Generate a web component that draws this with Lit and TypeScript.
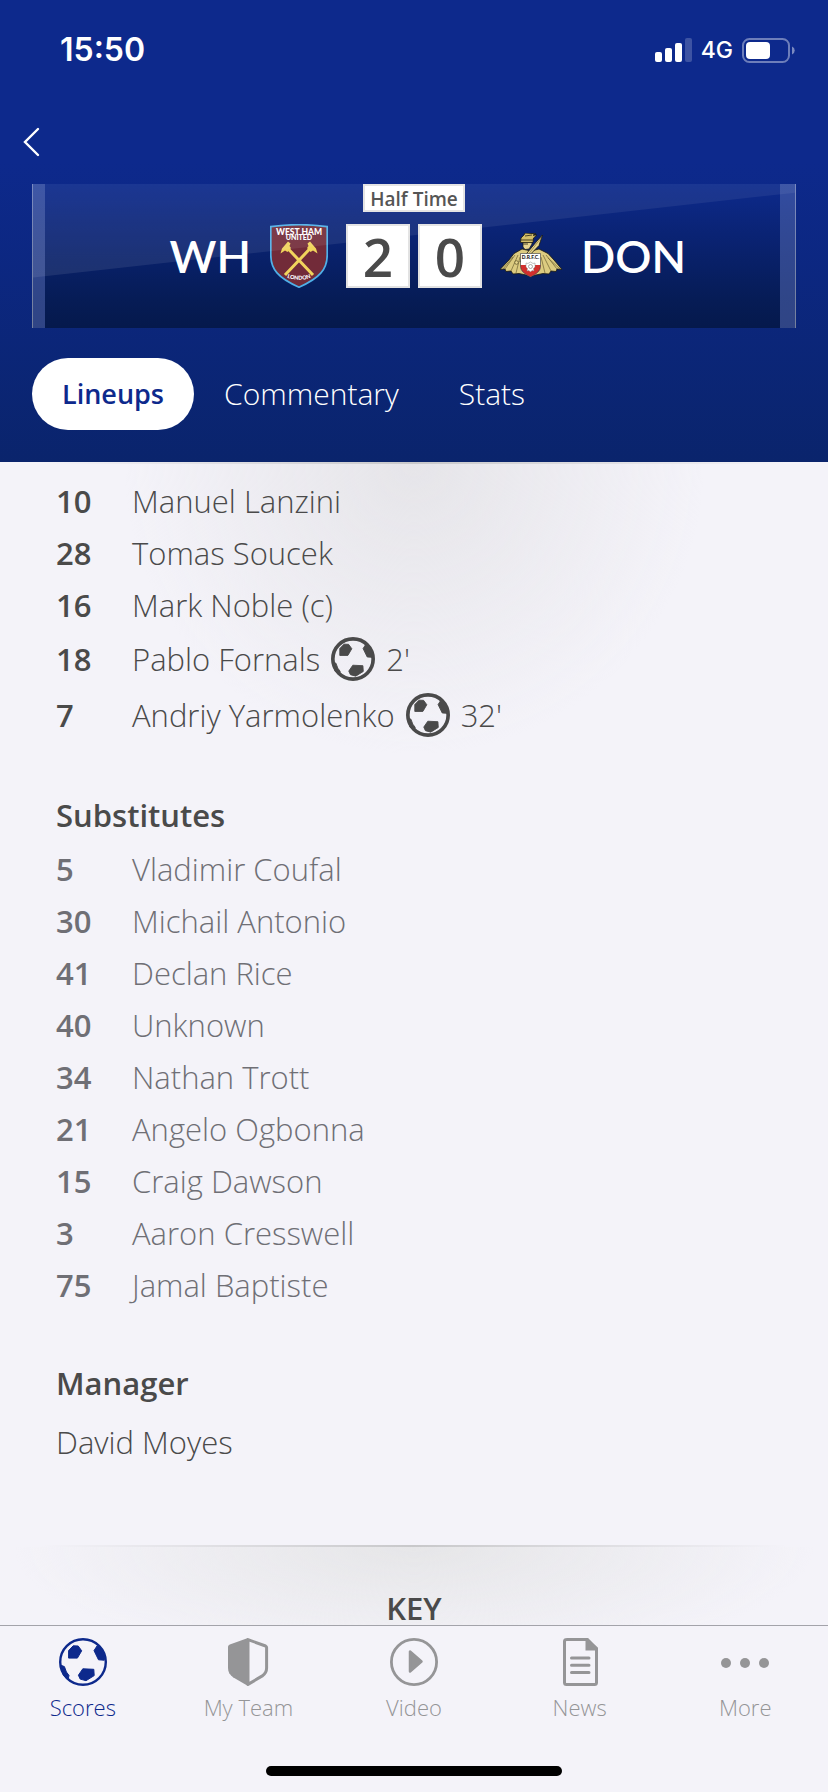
import { LitElement, html, css, svg, nothing } from "lit";
import { customElement, property, state } from "lit/decorators.js";
import { classMap } from "lit/directives/class-map.js";

interface Player {
  number: number;
  name: string;
  goal?: string;
}

const STARTERS: Player[] = [
  { number: 10, name: "Manuel Lanzini" },
  { number: 28, name: "Tomas Soucek" },
  { number: 16, name: "Mark Noble (c)" },
  { number: 18, name: "Pablo Fornals", goal: "2'" },
  { number: 7, name: "Andriy Yarmolenko", goal: "32'" },
];

const SUBSTITUTES: Player[] = [
  { number: 5, name: "Vladimir Coufal" },
  { number: 30, name: "Michail Antonio" },
  { number: 41, name: "Declan Rice" },
  { number: 40, name: "Unknown" },
  { number: 34, name: "Nathan Trott" },
  { number: 21, name: "Angelo Ogbonna" },
  { number: 15, name: "Craig Dawson" },
  { number: 3, name: "Aaron Cresswell" },
  { number: 75, name: "Jamal Baptiste" },
];

const ballPatches = svg`
  <path fill="currentColor" stroke="currentColor" stroke-linejoin="round" d="M9.6 12.6 14.2 7.8l5 .2 3.5 4.8-4.3 7.3H9.6ZM35 12.6l3-4.6 3 1.2 5 8.8-.8 4.2-5.7-.4ZM19.4 37.2l4.4-6.4 11 .5.4 6.3L27 42.7l-5.8-1.6ZM1.4 27l4 1.6 2 5.4 2.6 3.4-.8 3.8-4.8-4Z"/>`;

const goalIcon = html`<svg class="ball" viewBox="0 0 48 48" role="img" aria-label="Goal">
  <circle cx="24" cy="24" r="22" fill="none" stroke="currentColor" stroke-width="4"/>${ballPatches}
</svg>`;

const TABS = [
  {
    label: "Scores",
    icon: svg`<circle cx="24" cy="24" r="22.8" fill="none" stroke="currentColor" stroke-width="2.4"/>${ballPatches}`,
  },
  {
    label: "My Team",
    icon: svg`<path d="M24 1.6 41.600 8a1.800 1.800 0 0 1 1 1.800V30c0 3.400-1.500 6-4.300 7.900L24 46.400Z" fill="none" stroke="currentColor" stroke-width="3" stroke-linejoin="round"/>
      <path d="M24 0v48L9 39.200C5.800 37 4 33.800 4 30V9c0-1.200.700-2.100 1.800-2.500Z" fill="currentColor"/>`,
  },
  {
    label: "Video",
    icon: svg`<circle cx="24" cy="24" r="22.600" fill="none" stroke="currentColor" stroke-width="2.800"/>
      <path d="M20 13.500v20L31.500 23.500Z" fill="currentColor" stroke="currentColor" stroke-width="2.500" stroke-linejoin="round"/>`,
  },
  {
    label: "News",
    icon: svg`<path d="M10.400 1.500H31L40.500 10.500V44.500a2 2 0 0 1-2 2h-28a2 2 0 0 1-2-2v-41a2 2 0 0 1 2-2Z" fill="none" stroke="currentColor" stroke-width="3"/>
      <path d="M29.500 1v11.500H41.500V10L32 0Z" fill="currentColor"/>
      <path d="M15.500 20h17.500M15.500 27.300h17.500M15.500 34.500h17.500" stroke="currentColor" stroke-width="3" stroke-linecap="round"/>`,
  },
  {
    label: "More",
    icon: svg`<g fill="currentColor"><circle cx="5" cy="25" r="5"/><circle cx="24" cy="25" r="5"/><circle cx="43" cy="25" r="5"/></g>`,
  },
];

const westHamCrest = html`<svg class="crest-home" viewBox="0 0 58 64" role="img" aria-label="West Ham United crest">
  <path d="M.8 2.600Q29-1.200 57.200 2.600V31C57.200 45 50 54 29 63.200 8 54 .8 45 .8 31Z" fill="#722b39" stroke="#4fb0e8" stroke-width="1.700"/>
  <g fill="#fff" font-family="Lato, sans-serif" font-weight="900" text-anchor="middle">
    <text x="29" y="10.500" font-size="8.500">WEST HAM</text>
    <text x="29" y="16" font-size="7">UNITED</text>
    <path id="london" d="M14 52.500Q29 59 44 52.500" fill="none"/>
    <text font-size="5.500"><textPath href="#london" startOffset="50%">LONDON</textPath></text>
  </g>
  <g stroke="#f1d45c" fill="#f1d45c">
    <path d="M15.500 22 43 51M42.500 22 15 51" stroke-width="3"/>
    <path stroke="none" d="M18 17.500l2.500 2-1 2.500 1.500 2-3.500 4-2.500-1.500-4.500 3 1.500-5ZM40 17.500l-2.500 2 1 2.500-1.500 2 3.500 4 2.500-1.500 4.500 3-1.500-5Z"/>
  </g>
</svg>`;

const doncasterCrest = html`<svg class="crest-away" viewBox="0 0 62 46" role="img" aria-label="Doncaster Rovers crest">
  <path d="M22 16 14 20.500 9 27 0 36.500 5 36 6 38.500 11 38 13 41 19 40.500 31 43 43 40.500 49 41 51 38 56 38.500 57 36 62 36.500 54 27 48 20.500 39 16 31 18Z" fill="#dccb80" stroke="#19180f" stroke-width=".8"/>
  <path d="M15 22 5 36M18 22 11 38M20 24 16 40M46 22 57 36M43 22 51 38M41 24 45 40M48 25 60 36M13 24 3 36" stroke="#6d6232" stroke-width=".7"/>
  <path d="M23 9v5l2 2.500 4-.5 3-5V8Z" fill="#e6d592" stroke="#19180f" stroke-width=".7"/>
  <path d="M20.500 9.500 21 5 24 2l1-2 11 .8-3 1.400 4-.2-3.500 3L33 9.500Z" fill="#d3be69" stroke="#19180f" stroke-width=".8"/>
  <path d="M21 7h12M25 3l7-1M23 11h5" stroke="#4a4324"/>
  <path d="M42.500 2 39 12.500 23 29l-3-.5L37 8Z" fill="#e8d78e" stroke="#19180f" stroke-width=".8"/>
  <path d="M41 5 24 27" stroke="#85763c" stroke-width=".7"/>
  <circle cx="16.500" cy="29.500" r="1.800" fill="#e8d78e" stroke="#5b5129" stroke-width=".7"/>
  <path d="M20.500 20.500h20V33c0 5-4 8-10 11-6-3-10-6-10-11Z" fill="#fff"/>
  <path d="M20.500 32h20v1c0 5-4 8-10 11-6-3-10-6-10-11Z" fill="#d22f2d"/>
  <path d="M20.500 20.500h20V33c0 5-4 8-10 11-6-3-10-6-10-11Z" fill="none" stroke="#333" stroke-width=".6"/>
  <text x="30.500" y="26" text-anchor="middle" font-family="Lato, sans-serif" font-weight="900" font-size="5" fill="#222">D.R.F.C.</text>
  <path d="M26 30l2 .5 2.500-1.500 2.500 1.500 2-.5v4l-1.500 1.500.5 2.500-2-.5L30.500 39 29 37.500l-2 .5.500-2.500L26 34Z" fill="#fff" stroke="#888" stroke-width=".5"/>
  <circle cx="30.500" cy="33.500" r="2" fill="none" stroke="#777" stroke-width=".6"/>
</svg>`;

@customElement("squad-list")
class SquadList extends LitElement {
  @property({ attribute: false }) players: Player[] = [];

  static styles = css`
    :host { display: block; }
    .list { margin: 0; padding: 0; list-style: none; }
    .row { display: grid; grid-template-columns: 76px 1fr; align-items: center; min-height: 52px; }
    .row.scored { min-height: 56px; }
    .number { font-weight: 600; }
    .name { display: flex; align-items: center; gap: 11px; }
    .ball { width: 44px; height: 44px; }
  `;

  render() {
    return html`<ul class="list">
      ${this.players.map(
        (p) => html`<li class=${classMap({ row: true, scored: !!p.goal })}>
          <span class="number">${p.number}</span>
          <span class="name">${p.name}${p.goal ? html`${goalIcon}<span>${p.goal}</span>` : nothing}</span>
        </li>`
      )}
    </ul>`;
  }
}

@customElement("score-board")
class ScoreBoard extends LitElement {
  static styles = css`
    :host {
      display: grid;
      grid-template-columns: 12px 1fr 15px;
      height: 144px;
      border: solid rgba(255, 255, 255, 0.45);
      border-width: 0 1px;
      box-sizing: border-box;
      background: linear-gradient(#0d2a8c 0%, #0a2374 35%, #061c56 80%, #05194c 100%);
    }
    .frame {
      grid-area: 1 / 1 / 2 / 4;
      background: linear-gradient(rgba(255, 255, 255, 0.06), rgba(255, 255, 255, 0.1));
      clip-path: polygon(0 0, 100% 0, 100% 6%, 0 65%);
    }
    .post { grid-row: 1; background: linear-gradient(rgba(120, 140, 200, 0.35), rgba(90, 112, 190, 0.5)); }
    .post.left { grid-column: 1; }
    .post.right { grid-column: 3; }
    .content { grid-area: 1 / 1 / 2 / 4; display: flex; flex-direction: column; align-items: center; gap: 12px; }
    .status {
      box-sizing: border-box;
      height: 28px;
      padding: 0 5px;
      border: 2px solid #e2e2e2;
      background: #fff;
      color: #4a4a4a;
      font: 600 19px/26px "Open Sans", sans-serif;
    }
    .match { display: grid; grid-template-columns: 1fr auto 1fr; align-items: center; gap: 18px; width: 100%; }
    .team { display: flex; align-items: center; gap: 19px; font: 600 45px/64px Lato, sans-serif; color: #fff; }
    .team.home { justify-content: flex-end; }
    .score { display: flex; gap: 8px; }
    .goals {
      box-sizing: border-box;
      width: 64px;
      height: 64px;
      border: 2px solid #e2e2e2;
      background: #fff;
      color: #4a4a4a;
      font: 600 53px/62px "Open Sans", sans-serif;
      text-align: center;
    }
    .crest-home { width: 58px; height: 64px; }
    .crest-away { width: 62px; height: 46px; }
  `;

  render() {
    return html`
      <div class="frame"></div>
      <div class="post left"></div>
      <div class="post right"></div>
      <div class="content">
        <div class="status">Half Time</div>
        <div class="match">
          <div class="team home"><span>WH</span>${westHamCrest}</div>
          <div class="score"><span class="goals">2</span><span class="goals">0</span></div>
          <div class="team">${doncasterCrest}<span>DON</span></div>
        </div>
      </div>
    `;
  }
}

@customElement("app-root")
class AppRoot extends LitElement {
  @state() private view = "Lineups";
  @state() private tab = "Scores";

  static styles = css`
    :host {
      display: flex;
      flex-direction: column;
      height: 100vh;
      background: #f4f3f9;
      color: #4a4a4a;
      font: 340 31px/52px "Open Sans", "Noto Sans", sans-serif;
    }
    button { border: 0; background: none; padding: 0; font: inherit; color: inherit; cursor: pointer; }
    .header { flex: none; padding: 0 32px 32px; background: linear-gradient(#0d298c 0%, #0d298c 35%, #0a246c 100%); color: #fff; }
    .device { display: flex; align-items: center; justify-content: space-between; height: 100px; padding: 0 1px 0 28px; }
    .time { font: 600 32px/40px Inter, sans-serif; }
    .indicators { display: flex; align-items: center; gap: 9px; font: 500 23px/30px Inter, sans-serif; }
    .signal { width: 37px; height: 24px; }
    .battery { width: 53px; height: 25px; }
    .toolbar { display: flex; align-items: center; height: 84px; }
    .back { display: flex; margin-left: -10px; }
    .chevron { width: 18px; height: 30px; }
    .views { display: flex; margin-top: 30px; }
    .view { height: 72px; padding: 0 30px; border-radius: 36px; font-size: 30px; }
    .view.active { background: #fff; color: #0d298c; font-size: 27px; font-weight: 600; }
    .main { flex: 1; min-height: 0; overflow: hidden; }
    .panel { border-top: 2px solid; border-image: linear-gradient(90deg, transparent 5%, #c8c8ca 50%, transparent 95%) 1; }
    .squad { padding: 11px 56px 77px; background: radial-gradient(circle 290px at 50% 0, #e6e5e9, rgba(244, 243, 249, 0)); }
    .key { height: 220px; padding-top: 46px; text-align: center; background: radial-gradient(ellipse 400px 120px at 50% 0, #e6e6e8, rgba(244, 243, 249, 0)); }
    .title { margin: 0; font-size: 31px; font-weight: 600; }
    .squad .title { margin: 46px 0 2px; }
    .key .title { line-height: 30px; }
    .bench { color: #6f6f75; }
    .manager { margin: 7px 0 0; }
    .nav { flex: none; padding: 12px 0 16px; border-top: 1px solid #a3a3aa; background: #f4f3f9; }
    .tabs { display: grid; grid-template-columns: repeat(5, 1fr); }
    .tab { display: flex; flex-direction: column; align-items: center; gap: 6px; color: #959597; font-size: 22px; line-height: 30px; }
    .tab.active { color: #0d298c; }
    .icon { width: 48px; height: 48px; }
    .home { width: 296px; height: 10px; margin: 44px auto 0; border-radius: 5px; background: #000; }
  `;

  render() {
    return html`
      <header class="header">
        <div class="device">
          <span class="time">15:50</span>
          <div class="indicators">
            <svg class="signal" viewBox="0 0 37 24" aria-hidden="true">
              <g fill="#fff">
                <rect x="0" y="14" width="7" height="10" rx="2"/>
                <rect x="10" y="10" width="7" height="14" rx="2"/>
                <rect x="20" y="5" width="7" height="19" rx="2"/>
                <rect x="30" y="0" width="7" height="24" rx="2" opacity=".2"/>
              </g>
            </svg>
            <span>4G</span>
            <svg class="battery" viewBox="0 0 53 25" aria-hidden="true">
              <rect x="1" y="1" width="46" height="23" rx="6.500" fill="none" stroke="#fff" stroke-opacity=".4" stroke-width="2"/>
              <rect x="4" y="4" width="24" height="17" rx="4" fill="#fff"/>
              <path d="M50 8.500a4.300 4.300 0 0 1 0 8Z" fill="#fff" opacity=".45"/>
            </svg>
          </div>
        </div>
        <div class="toolbar">
          <button class="back" aria-label="Back">
            <svg class="chevron" viewBox="0 0 18 30"><path d="M16 2 3 15 16 28" fill="none" stroke="#fff" stroke-width="2.400" stroke-linecap="round"/></svg>
          </button>
        </div>
        <score-board></score-board>
        <div class="views">
          ${["Lineups", "Commentary", "Stats"].map(
            (v) => html`<button class=${classMap({ view: true, active: v === this.view })} @click=${() => (this.view = v)}>${v}</button>`
          )}
        </div>
      </header>
      <main class="main">
        <section class="panel squad">
          <squad-list .players=${STARTERS}></squad-list>
          <h2 class="title">Substitutes</h2>
          <squad-list class="bench" .players=${SUBSTITUTES}></squad-list>
          <h2 class="title">Manager</h2>
          <p class="manager">David Moyes</p>
        </section>
        <section class="panel key"><h2 class="title">KEY</h2></section>
      </main>
      <nav class="nav">
        <div class="tabs">
          ${TABS.map(
            (t) => html`<button class=${classMap({ tab: true, active: t.label === this.tab })} @click=${() => (this.tab = t.label)}>
              <svg class="icon" viewBox="0 0 48 48" aria-hidden="true">${t.icon}</svg>
              <span>${t.label}</span>
            </button>`
          )}
        </div>
        <div class="home"></div>
      </nav>
    `;
  }
}
